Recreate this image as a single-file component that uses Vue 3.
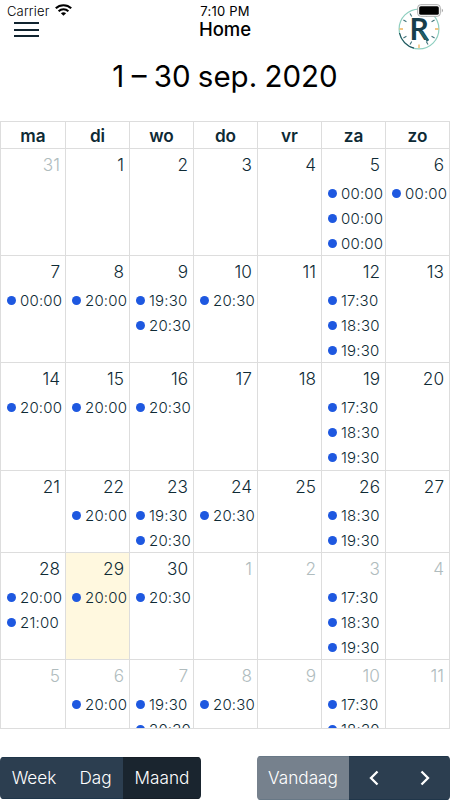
<script setup>
const days = ['ma', 'di', 'wo', 'do', 'vr', 'za', 'zo'];

const weeks = [
    {
        height: 107,
        dates: [
            { day: 31, other: true }, { day: 1 }, { day: 2 }, { day: 3 }, { day: 4 },
            { day: 5, events: ['00:00', '00:00', '00:00'] },
            { day: 6, events: ['00:00'] }
        ]
    },
    {
        height: 107,
        dates: [
            { day: 7, events: ['00:00'] },
            { day: 8, events: ['20:00'] },
            { day: 9, events: ['19:30', '20:30'] },
            { day: 10, events: ['20:30'] },
            { day: 11 },
            { day: 12, events: ['17:30', '18:30', '19:30'] },
            { day: 13 }
        ]
    },
    {
        height: 108,
        dates: [
            { day: 14, events: ['20:00'] },
            { day: 15, events: ['20:00'] },
            { day: 16, events: ['20:30'] },
            { day: 17 },
            { day: 18 },
            { day: 19, events: ['17:30', '18:30', '19:30'] },
            { day: 20 }
        ]
    },
    {
        height: 82,
        dates: [
            { day: 21 },
            { day: 22, events: ['20:00'] },
            { day: 23, events: ['19:30', '20:30'] },
            { day: 24, events: ['20:30'] },
            { day: 25 },
            { day: 26, events: ['18:30', '19:30'] },
            { day: 27 }
        ]
    },
    {
        height: 107,
        dates: [
            { day: 28, events: ['20:00', '21:00'] },
            { day: 29, today: true, events: ['20:00'] },
            { day: 30, events: ['20:30'] },
            { day: 1, other: true },
            { day: 2, other: true },
            { day: 3, other: true, events: ['17:30', '18:30', '19:30'] },
            { day: 4, other: true }
        ]
    },
    {
        height: 69,
        dates: [
            { day: 5, other: true },
            { day: 6, other: true, events: ['20:00'] },
            { day: 7, other: true, events: ['19:30', '20:30'] },
            { day: 8, other: true, events: ['20:30'] },
            { day: 9, other: true },
            { day: 10, other: true, events: ['17:30', '18:30'] },
            { day: 11, other: true }
        ]
    }
];

const ticks = [30, 60, 120, 150, 210, 240, 300, 330];
</script>

<template>
    <div class="screen">
        <header class="header">
            <div class="left">
                <div class="carrier">
                    <span>Carrier</span>
                    <svg width="17" height="12" viewBox="0 0 17 12" fill="none" stroke="#000" stroke-width="2.1">
                        <path d="M.8 4.3C5 .2 12 .2 16.2 4.3" />
                        <path d="M3.6 7.2C6.4 4.6 10.6 4.6 13.4 7.2" />
                        <path d="M8.5 11.8L5.9 9.2C7.4 7.9 9.6 7.9 11.1 9.2Z" fill="#000" stroke="none" />
                    </svg>
                </div>
                <div class="menu"><i></i><i></i><i></i></div>
            </div>
            <div class="center">
                <div class="time">7:10 PM</div>
                <div class="page-name">Home</div>
            </div>
            <div class="right">
                <svg class="logo" width="42" height="42" viewBox="0 0 42 42" fill="none">
                    <circle cx="21" cy="21" r="19.9" stroke="#8fcfc0" stroke-width="1.2" />
                    <path d="M1.5 25A19.9 19.9 0 0 0 16 40.2" stroke="#20525c" stroke-width="1.2" />
                    <path d="M21 36.5V40M1.5 21H5M37 21H40.5" stroke="#efb45b" stroke-width="1.3" />
                    <path
                        v-for="angle in ticks"
                        :key="angle"
                        d="M21 3V6.5"
                        :transform="`rotate(${angle} 21 21)`"
                        stroke="#41747b"
                        stroke-width="1.1" />
                    <text x="11.6" y="32" class="logo-letter">R</text>
                    <path d="M22.5 23.5L30 33" stroke="#20606a" stroke-width="2.6" />
                </svg>
                <svg class="battery" width="28" height="14" viewBox="0 0 28 14">
                    <rect x=".7" y=".7" width="22.6" height="11.6" rx="3" fill="#fff" stroke="#aaa" stroke-width="1" />
                    <rect x="2.2" y="2.2" width="19.6" height="8.6" rx="1.6" fill="#000" />
                    <path d="M24.8 4.5Q27 6.5 24.8 8.5Z" fill="#999" />
                </svg>
            </div>
        </header>

        <h1>1 – 30 sep. 2020</h1>

        <div class="calendar">
            <div class="row heading">
                <div v-for="name in days" :key="name" class="cell">{{ name }}</div>
            </div>
            <div
                v-for="(week, index) in weeks"
                :key="index"
                class="row"
                :style="{ height: week.height + 'px' }">
                <div
                    v-for="date in week.dates"
                    :key="date.day"
                    :class="['cell', { other: date.other, today: date.today }]">
                    <div class="number">{{ date.day }}</div>
                    <div v-for="(event, i) in date.events" :key="i" class="event">
                        <span class="dot"></span>
                        <span>{{ event }}</span>
                    </div>
                </div>
            </div>
        </div>

        <footer class="toolbar">
            <div class="group views">
                <button class="week">Week</button>
                <button class="day">Dag</button>
                <button class="month active">Maand</button>
            </div>
            <div class="group navigation">
                <button class="now" disabled>Vandaag</button>
                <button class="arrow">
                    <svg width="10" height="16" viewBox="0 0 10 16"><path d="M8.5 1.5L2 8L8.5 14.5" /></svg>
                </button>
                <button class="arrow">
                    <svg width="10" height="16" viewBox="0 0 10 16"><path d="M1.5 1.5L8 8L1.5 14.5" /></svg>
                </button>
            </div>
        </footer>
    </div>
</template>

<style>
body {
    background: #fff;
    overflow: hidden;
}
</style>

<style scoped>
.screen {
    width: 450px;
    height: 800px;
    display: flex;
    flex-direction: column;
    overflow: hidden;
    font-family: Inter, "Liberation Sans", sans-serif;
    font-weight: 300;
    color: #0e2a35;
    background: #fff;
}

.screen * {
    box-sizing: border-box;
}

.header {
    height: 54px;
    display: grid;
    grid-template-columns: 1fr 100px 1fr;
    color: #000;
}

.carrier {
    display: flex;
    gap: 5px;
    padding: 4px 0 0 7px;
    height: 22px;
    font-size: 13px;
    line-height: 15px;
    letter-spacing: .15px;
}

.menu {
    width: 25px;
    margin-left: 14px;
    display: flex;
    flex-direction: column;
    gap: 4.5px;
}

.menu i {
    height: 2px;
    background: #10232f;
}

.center {
    text-align: center;
}

.time {
    padding-top: 4px;
    font-size: 13px;
    font-weight: 400;
    line-height: 15px;
    letter-spacing: .2px;
}

.page-name {
    font-size: 18.5px;
    line-height: 20px;
    font-weight: 500;
    letter-spacing: -.1px;
}

.right {
    position: relative;
    display: flex;
    justify-content: flex-end;
    padding: 8px 10px 0 0;
}

.logo-letter {
    font-family: Lato, sans-serif;
    font-size: 30px;
    font-weight: 700;
    fill: #173e4c;
}

.battery {
    position: absolute;
    top: 4px;
    right: 5px;
}

h1 {
    height: 67px;
    margin: 0;
    font-size: 29.5px;
    line-height: 45px;
    font-weight: 400;
    word-spacing: -1px;
    text-align: center;
    color: #000;
}

.calendar {
    border: solid #ddd;
    border-width: 1px 0 0 1px;
}

.row {
    display: grid;
    grid-template-columns: 65px repeat(6, 64px);
}

.heading {
    height: 27px;
    font-size: 17.2px;
    line-height: 27px;
    font-weight: 600;
    text-align: center;
}

.cell {
    min-width: 0;
    overflow: hidden;
    border: solid #ddd;
    border-width: 0 1px 1px 0;
}

.today {
    background: #fff8df;
}

.number {
    height: 32px;
    padding: 5px 5px 0 0;
    font-size: 17.2px;
    line-height: 22px;
    text-align: right;
}

.other .number {
    color: #b0bcbe;
}

.event {
    height: 25px;
    display: flex;
    align-items: center;
    gap: 4px;
    padding-left: 6px;
    font-size: 15px;
    letter-spacing: .2px;
    white-space: nowrap;
}

.dot {
    flex: none;
    width: 9px;
    height: 9px;
    border-radius: 50%;
    background: #1e58e0;
}

.toolbar {
    display: flex;
    justify-content: space-between;
    align-items: center;
    height: 44px;
    margin-top: 27px;
}

.group {
    display: flex;
    border-radius: 4px;
    overflow: hidden;
}

.views {
    height: 42px;
    width: 201px;
}

.navigation {
    height: 44px;
    width: 193px;
}

button {
    display: flex;
    align-items: center;
    justify-content: center;
    padding: 0 0 1px;
    border: 1px solid #20364a;
    border-width: 1px 0;
    background: #2c3e50;
    color: #fff;
    font-family: inherit;
    font-size: 17.2px;
    font-weight: 300;
}

.week {
    width: 68px;
}

.day {
    width: 55px;
}

.month {
    width: 78px;
}

.active {
    background: #1a252f;
    border-color: #151e27;
}

.now {
    width: 92px;
    background: #76818d;
    border-color: #687886;
}

.arrow {
    flex: 1;
}

.arrow path {
    fill: none;
    stroke: #fff;
    stroke-width: 2.3;
}
</style>
